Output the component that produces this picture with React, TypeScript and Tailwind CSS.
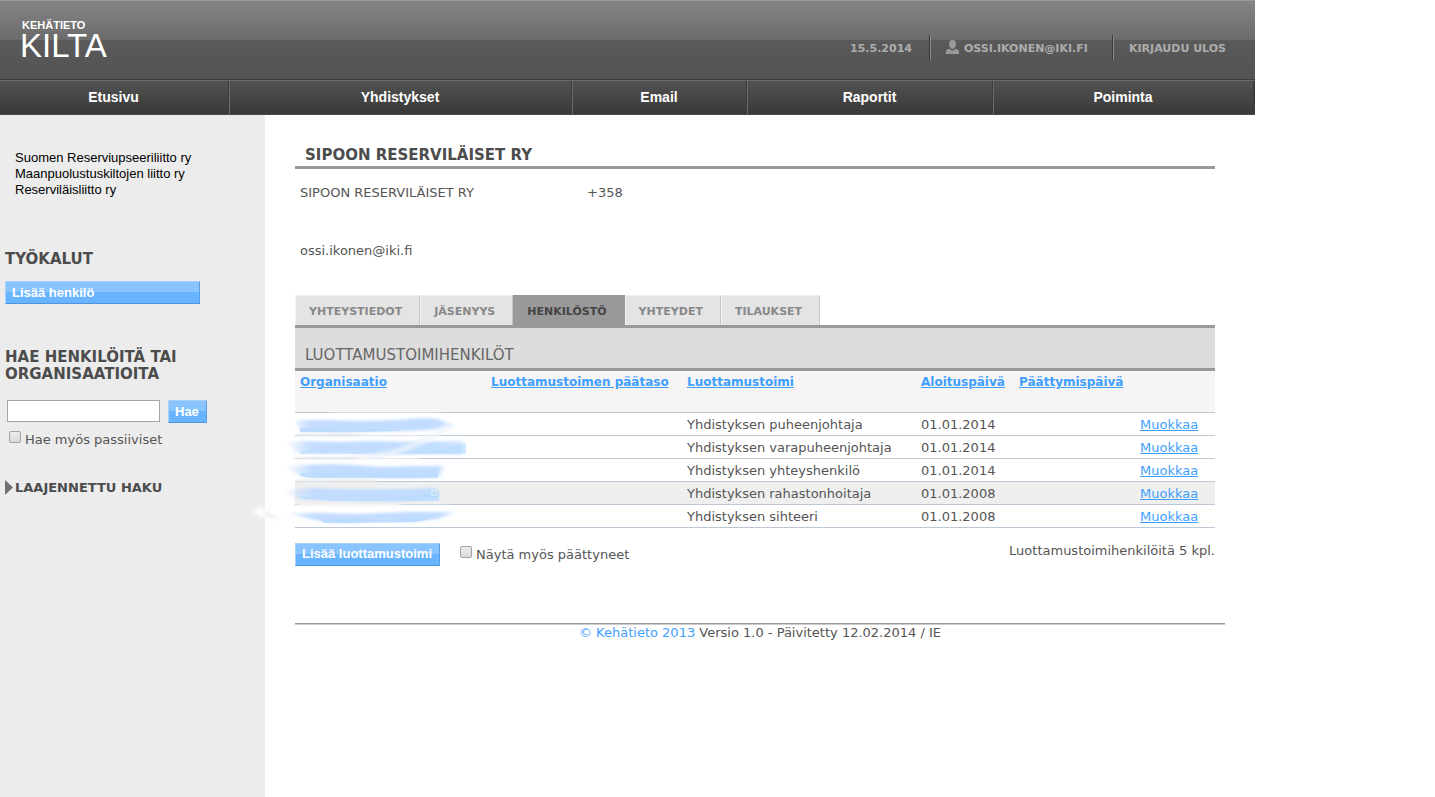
import React from "react";

const navItems = ["Etusivu", "Yhdistykset", "Email", "Raportit", "Poiminta"];

const tabs = ["YHTEYSTIEDOT", "JÄSENYYS", "HENKILÖSTÖ", "YHTEYDET", "TILAUKSET"];

const rows = [
  { role: "Yhdistyksen puheenjohtaja", start: "01.01.2014" },
  { role: "Yhdistyksen varapuheenjohtaja", start: "01.01.2014" },
  { role: "Yhdistyksen yhteyshenkilö", start: "01.01.2014" },
  { role: "Yhdistyksen rahastonhoitaja", start: "01.01.2008", active: true },
  { role: "Yhdistyksen sihteeri", start: "01.01.2008" },
];

const bodyFont = "font-['DejaVu_Sans',sans-serif]";
const arialFont = "font-['Liberation_Sans',sans-serif]";

function BlueButton({ children, className = "" }: { children: React.ReactNode; className?: string }) {
  return (
    <button
      type="button"
      className={`h-[23px] border border-t-[#a6d2fb] border-l-[#a6d2fb] border-r-[#5a9fdf] border-b-[#4f94d8] bg-linear-to-b from-[#89c4ff] from-50% to-[#69b4ff] to-50% pr-[7px] pl-[6px] text-left text-[13px] leading-5 font-bold whitespace-nowrap text-white ${arialFont} ${className}`}
    >
      {children}
    </button>
  );
}

function Check({ id, label }: { id: string; label: string }) {
  return (
    <div className="flex items-start gap-1">
      <input
        id={id}
        type="checkbox"
        className="mt-px size-3 appearance-none rounded-[2px] border border-[#a4a4a4] bg-linear-to-b from-[#ececec] to-[#dadada] checked:bg-[#3f9fff]"
      />
      <label htmlFor={id} className="leading-5">
        {label}
      </label>
    </div>
  );
}

function HeaderDivider() {
  return <span className="h-[25px] w-[2px] border-r border-l border-r-[#8c8c8c] border-l-[#3a3a3a]" />;
}

function Header() {
  return (
    <header>
      <div className="flex h-20 items-start justify-between border-t border-b border-t-[#999] border-b-[#3c3c3c] bg-[linear-gradient(#858585_0,#6b6b6b_50%,#5a5a5a_50%,#535353_100%)] pr-6 pl-5">
        <a href="#" className={`block pt-[17px] text-white ${arialFont}`}>
          <span className="block pl-[2px] text-[11px] leading-[14px] font-bold">KEHÄTIETO</span>
          <span className="block text-[33px] leading-[28px]">KILTA</span>
        </a>
        <div className="flex gap-[15px] pt-[34px] text-[11px] leading-[27px] font-bold text-[#adadad]">
          <span className="w-16">15.5.2014</span>
          <HeaderDivider />
          <a href="#" className="flex w-[151px] gap-[5px]">
            <svg viewBox="0 0 13 14" className="mt-[5px] h-[14px] w-[13px] fill-[#999]" aria-hidden="true">
              <path d="M6.5 0C8.800 0 10 1.500 10 3.800 10 6.300 8.500 9 6.500 9S3 6.300 3 3.800C3 1.500 4.200 0 6.500 0Z" />
              <path d="M0 14V11.700C0 10.300 1.200 9.300 3.300 8.800 4.200 9.900 5.300 10.500 6.500 10.500S8.800 9.900 9.700 8.800C11.800 9.300 13 10.300 13 11.700V14Z" />
            </svg>
            OSSI.IKONEN@IKI.FI
          </a>
          <HeaderDivider />
          <a href="#" className="w-[102px] whitespace-nowrap">KIRJAUDU ULOS</a>
        </div>
      </div>
      <nav
        className={`grid h-[35px] grid-cols-[230fr_343fr_175fr_246fr_261fr] border-t border-b border-t-[#6a6a6a] border-b-[#4a4a4a] bg-linear-to-b from-[#525252] to-[#393939] text-[14px] font-bold text-white ${arialFont}`}
      >
        {navItems.map((item) => (
          <a
            key={item}
            href="#"
            className="flex items-center justify-center border-r border-r-[#6c6c6c] pr-[2px] shadow-[inset_-1px_0_0_#3c3c3c] last:border-r-[#3c3c3c]"
          >
            {item}
          </a>
        ))}
      </nav>
    </header>
  );
}

function Sidebar() {
  const heading = "text-[15px] leading-[17px] font-bold text-[#4c4c4c]";
  return (
    <aside className="w-[265px] shrink-0 bg-[#ececec] pt-[35px] pl-[5px]">
      <ul className={`pl-[10px] text-[13px] leading-4 text-black ${arialFont}`}>
        <li>Suomen Reserviupseeriliitto ry</li>
        <li>Maanpuolustuskiltojen liitto ry</li>
        <li>Reserviläisliitto ry</li>
      </ul>

      <h2 className={`mt-[53px] ${heading}`}>TYÖKALUT</h2>
      <BlueButton className="mt-[13px] w-[195px]">Lisää henkilö</BlueButton>

      <h2 className={`mt-[45px] ${heading}`}>
        HAE HENKILÖITÄ TAI
        <br />
        ORGANISAATIOITA
      </h2>
      <form className="mt-[17px] pl-[2px]">
        <div className="flex gap-2">
          <input
            type="text"
            aria-label="Hae henkilöitä tai organisaatioita"
            className="h-[22px] w-[153px] border border-[#a5a5a5] bg-white px-1"
          />
          <BlueButton>Hae</BlueButton>
        </div>
        <div className="mt-[7px] pl-[2px]">
          <Check id="passive" label="Hae myös passiiviset" />
        </div>
      </form>

      <a href="#" className="mt-7 flex items-center gap-[2px] font-bold text-[#4c4c4c]">
        <svg viewBox="0 0 8 15" className="h-[15px] w-2 fill-[#707070]" aria-hidden="true">
          <path d="M0 0 8 7.500 0 15Z" />
        </svg>
        LAAJENNETTU HAKU
      </a>
    </aside>
  );
}

function Smudges() {
  return (
    <svg
      viewBox="0 0 260 120"
      className="pointer-events-none absolute top-[40px] -left-[45px] h-[120px] w-[260px]"
      aria-hidden="true"
    >
      <defs>
        <filter id="soft" x="-10%" y="-50%" width="120%" height="200%">
          <feGaussianBlur stdDeviation="2 1.5" />
        </filter>
        <filter id="edge" x="-10%" y="-80%" width="120%" height="260%">
          <feGaussianBlur stdDeviation="0.7" />
        </filter>
        <filter id="haze" x="-20%" y="-80%" width="140%" height="260%">
          <feGaussianBlur stdDeviation="3 0.8" />
        </filter>
        <linearGradient id="fade" gradientUnits="userSpaceOnUse" x1="34" x2="208" y1="0" y2="0">
          <stop offset="0" stopColor="#c3dcff" stopOpacity="0" />
          <stop offset="0.16" stopColor="#c3dcff" />
          <stop offset="0.85" stopColor="#c0dcff" />
          <stop offset="1" stopColor="#c0dcff" stopOpacity="0.8" />
        </linearGradient>
      </defs>
      <g filter="url(#haze)" fill="none" strokeWidth="3">
        <path d="M80 1H190" stroke="#f6f4f5" opacity="0.5" />
        <path d="M47 24H120" stroke="#eaecee" />
        <path d="M110 24.500H175" stroke="#fff" opacity="0.6" />
        <path d="M47 47H120" stroke="#eceef0" />
        <path d="M110 47.500H170" stroke="#fff" opacity="0.6" />
        <path d="M47 70H125" stroke="#e9ebec" />
        <path d="M47 93H150" stroke="#f0f0f0" strokeWidth="4" />
        <path d="M47 96H200" stroke="#fff" strokeWidth="3" />
      </g>
      <g filter="url(#soft)">
        <path fill="#fff" d="M4 99Q8 95 15 96V108Q8 106 4 101Z" opacity="0.9" />
        <path fill="#efefef" d="M15 99 24 103 30 109 15 106Z" opacity="0.8" />
      </g>
      <g filter="url(#soft)" fill="url(#fade)">
        <path d="M46 9 80 9 110 10 145 9 175 7 188 8 204 15 186 18 160 20 130 20 90 21 50 20Z" />
        <path d="M38 31 52 30 90 31 120 30 160 31 213 30 213 43 165 43 125 43 90 42 46 42Z" />
        <path d="M32 55 80 53 105 54 130 56 160 55 193 55 189 66 150 67 115 66 80 66 50 65Z" />
        <path d="M30 79 62 77 95 78 125 78 160 78 185 77 189 82 188 88 150 90 115 90 80 89 46 88Z" />
        <path d="M34 102 70 102 110 103 155 101 204 101 188 108 160 111 130 110 100 112 75 111 56 107Z" />
      </g>
      <g filter="url(#edge)" fill="#b5d8ff">
        <path d="M50 17 70 18 90 19 130 18 150 19V20L110 21H50Z" opacity="0.8" />
        <path d="M50 40 75 39 100 41 140 40 180 41 216 32V43H150L110 43H50Z" opacity="0.55" />
        <path d="M50 62 75 63 110 64 145 63 170 64 188 62V67H60L50 65Z" opacity="0.75" />
        <path d="M50 85 70 87 120 88 160 86 189 80V90H80L50 87Z" opacity="0.6" />
        <path d="M70 109 100 108 130 109 160 108 180 108 165 111 100 112 75 112Z" opacity="0.75" />
      </g>
      <path
        d="M145 64H187"
        fill="none"
        stroke="#e6f3ff"
        strokeWidth="1.500"
        strokeDasharray="3 5 6 4 2 4"
        filter="url(#edge)"
      />
      <circle cx="184" cy="82" r="2.500" fill="none" stroke="#d5eaf5" strokeWidth="1.500" filter="url(#edge)" />
      <path
        d="M118 46Q160 42 200 14"
        filter="url(#soft)"
        fill="none"
        stroke="#eef4fc"
        strokeWidth="6"
        opacity="0.8"
      />
    </svg>
  );
}

function StaffTable() {
  const sortLink = "text-[#3f9fff] underline";
  return (
    <div className="relative">
      <table className="w-full table-fixed border-collapse text-left">
        <colgroup>
          <col className="w-[191px]" />
          <col className="w-[196px]" />
          <col className="w-[234px]" />
          <col className="w-[98px]" />
          <col />
          <col className="w-20" />
        </colgroup>
        <thead>
          <tr className="h-[41px] border-b border-[#bcc8d6] bg-[#f6f4f5] align-top text-[12px] leading-[23px] whitespace-nowrap">
            <th className="pl-[5px]"><a href="#" className={sortLink}>Organisaatio</a></th>
            <th className="pl-[5px]"><a href="#" className={sortLink}>Luottamustoimen päätaso</a></th>
            <th className="pl-[5px]"><a href="#" className={sortLink}>Luottamustoimi</a></th>
            <th className="pl-[5px]"><a href="#" className={sortLink}>Aloituspäivä</a></th>
            <th className="pl-[5px]"><a href="#" className={sortLink}>Päättymispäivä</a></th>
            <th aria-label="Muokkaa" />
          </tr>
        </thead>
        <tbody>
          {rows.map((row) => (
            <tr
              key={row.role}
              className={`h-[23px] border-b border-[#bcc8d6] leading-5 whitespace-nowrap ${row.active ? "bg-[#efefef]" : ""}`}
            >
              <td />
              <td />
              <td className="pt-[2px] pl-[5px]">{row.role}</td>
              <td className="pt-[2px] pl-[5px]">{row.start}</td>
              <td />
              <td className="pt-[2px] pl-[5px]"><a href="#" className={sortLink}>Muokkaa</a></td>
            </tr>
          ))}
        </tbody>
      </table>
      <Smudges />
    </div>
  );
}

export default function App() {
  return (
    <div className="min-h-screen bg-white">
      <div className={`flex min-h-screen max-w-[1255px] flex-col text-[13px] text-[#555] ${bodyFont}`}>
        <Header />
        <div className="flex grow">
          <Sidebar />
          <main className="min-w-0 grow pt-[30px] pr-[30px] pl-[30px]">
            <div className="pr-[10px]">
              <h1 className="border-b-[3px] border-[#999] pb-px pl-[10px] text-[15px] leading-5 font-bold text-[#4c4c4c]">
                SIPOON RESERVILÄISET RY
              </h1>

              <div className="grid grid-cols-[287px_1fr] grid-rows-[29px_29px_29px] items-center pt-[9px] pl-[5px]">
                <span>SIPOON RESERVILÄISET RY</span>
                <span>+358</span>
                <span className="col-span-2" />
                <span className="col-span-2">ossi.ikonen@iki.fi</span>
              </div>

              <div className="mt-[30px] flex border-b-[3px] border-[#999] text-[11px] font-bold" role="tablist">
                {tabs.map((tab) => {
                  const selected = tab === "HENKILÖSTÖ";
                  return (
                    <button
                      key={tab}
                      type="button"
                      role="tab"
                      aria-selected={selected}
                      className={`h-[30px] border-t border-r border-l pt-[3px] pr-[17px] pl-[13px] ${
                        selected
                          ? "border-[#999] bg-[#999] text-[#444]"
                          : "border-t-[#efefef] border-r-[#c4c4c4] border-l-[#f5f5f5] bg-[#e4e4e4] text-[#888]"
                      }`}
                    >
                      {tab}
                    </button>
                  );
                })}
              </div>

              <h2 className="border-b-[3px] border-[#999] bg-[#ddd] pt-[17px] pb-[3px] pl-[10px] text-[15px] leading-5 text-[#666]">
                LUOTTAMUSTOIMIHENKILÖT
              </h2>

              <StaffTable />

              <div className="mt-[15px] flex items-start">
                <BlueButton>Lisää luottamustoimi</BlueButton>
                <div className="pt-[2px] pl-5">
                  <Check id="ended" label="Näytä myös päättyneet" />
                </div>
                <span className="ml-auto leading-4">Luottamustoimihenkilöitä 5 kpl.</span>
              </div>
            </div>

            <footer className="mt-[57px] border-t border-[#999] text-center leading-[18px] shadow-[inset_0_1px_0_#ccc]">
              <a href="#" className="text-[#3f9fff]">© Kehätieto 2013</a> Versio 1.0 - Päivitetty 12.02.2014 / IE
            </footer>
          </main>
        </div>
      </div>
    </div>
  );
}
